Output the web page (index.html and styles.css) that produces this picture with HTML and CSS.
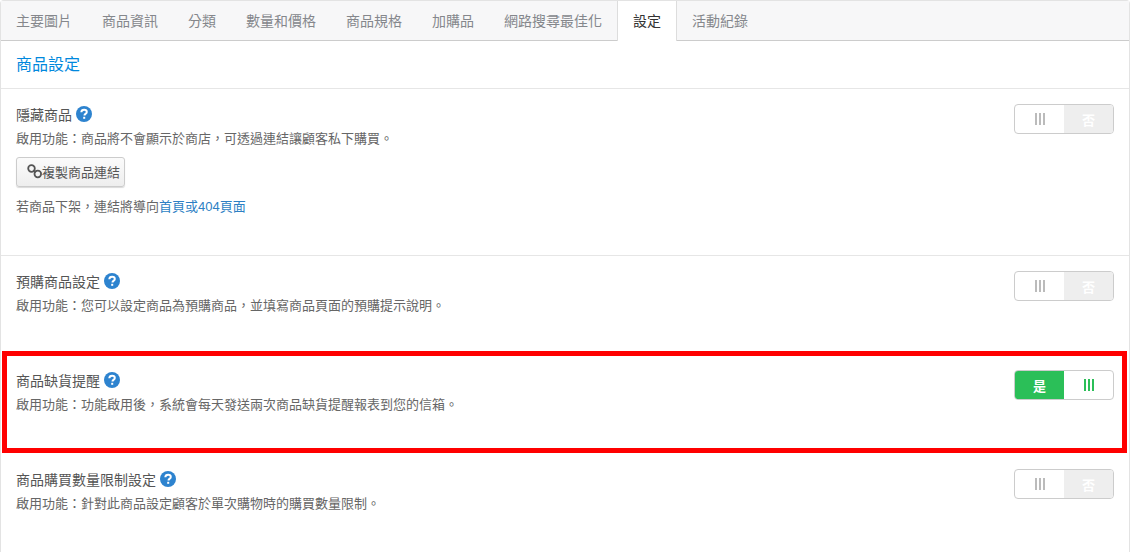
FILE: index.html
```html
<!DOCTYPE html>
<html lang="zh-Hant">
<head>
  <meta charset="UTF-8" />
  <title>商品設定</title>
  <link rel="stylesheet" href="styles.css">
</head>
<body>

<div class="panel">
  <ul class="tabs">
    <li>主要圖片</li>
    <li>商品資訊</li>
    <li>分類</li>
    <li>數量和價格</li>
    <li>商品規格</li>
    <li>加購品</li>
    <li>網路搜尋最佳化</li>
    <li class="active">設定</li>
    <li>活動紀錄</li>
  </ul>

  <h2 class="panel-title">商品設定</h2>

  <div class="row row-tall">
    <div class="row-text">
      <h3>隱藏商品 <svg class="help" viewBox="0 0 16 16"><use href="#help-icon"/></svg></h3>
      <p>啟用功能：商品將不會顯示於商店，可透過連結讓顧客私下購買。</p>
      <button class="copy-btn">
        <svg class="link-icon" viewBox="0 0 15 15"><circle cx="4.500" cy="4.500" r="3.300"/><circle cx="10.800" cy="10" r="3.300"/><path d="M6.500 6.200 9 8"/></svg>複製商品連結
      </button>
      <p class="redirect">若商品下架，連結將導向<a href="#">首頁或<span class="num">404</span>頁面</a></p>
    </div>
    <div class="toggle"><span class="bars"><i></i><i></i><i></i></span><span class="no">否</span></div>
  </div>

  <div class="row">
    <div class="row-text">
      <h3>預購商品設定 <svg class="help" viewBox="0 0 16 16"><use href="#help-icon"/></svg></h3>
      <p>啟用功能：您可以設定商品為預購商品，並填寫商品頁面的預購提示說明。</p>
    </div>
    <div class="toggle"><span class="bars"><i></i><i></i><i></i></span><span class="no">否</span></div>
  </div>

  <div class="row">
    <div class="row-text">
      <h3>商品缺貨提醒 <svg class="help" viewBox="0 0 16 16"><use href="#help-icon"/></svg></h3>
      <p>啟用功能：功能啟用後，系統會每天發送兩次商品缺貨提醒報表到您的信箱。</p>
    </div>
    <div class="toggle on"><span class="yes">是</span><span class="bars"><i></i><i></i><i></i></span></div>
  </div>

  <div class="row">
    <div class="row-text">
      <h3>商品購買數量限制設定 <svg class="help" viewBox="0 0 16 16"><use href="#help-icon"/></svg></h3>
      <p>啟用功能：針對此商品設定顧客於單次購物時的購買數量限制。</p>
    </div>
    <div class="toggle"><span class="bars"><i></i><i></i><i></i></span><span class="no">否</span></div>
  </div>

  <div class="highlight"></div>
</div>

<svg class="defs" width="0" height="0">
  <symbol id="help-icon" viewBox="0 0 16 16">
    <circle cx="8" cy="8" r="8" fill="#2d83cf"/>
    <path d="M5.300 6.200C5.400 4.600 6.500 3.700 8.100 3.700c1.600 0 2.700.9 2.700 2.200 0 1-.5 1.500-1.300 2-.7.5-1 .8-1 1.600" fill="none" stroke="#fff" stroke-width="2"/>
    <rect x="7.200" y="10.800" width="2" height="2" fill="#fff"/>
  </symbol>
</svg>

</body>
</html>
```

FILE: styles.css
```css
* {
  margin: 0;
  padding: 0;
  box-sizing: border-box;
}

body {
  background: #fff;
  font-family: "Noto Sans CJK TC", "Liberation Sans", sans-serif;
  color: #555;
  height: 552px;
  overflow: hidden;
}

.defs {
  position: absolute;
}

.panel {
  position: relative;
  width: 1130px;
  height: 552px;
  border: 1px solid #e3e3e3;
  border-bottom: none;
  border-radius: 4px 4px 0 0;
}

.tabs {
  display: flex;
  height: 40px;
  list-style: none;
  background: #f7f7f8;
  border-bottom: 1px solid #ccc;
}

.tabs li {
  padding: 0 15px;
  line-height: 39px;
  font-size: 14px;
  color: #85878c;
}

.tabs li.active {
  height: 40px;
  color: #333;
  background: #fff;
  border-left: 1px solid #ddd;
  border-right: 1px solid #ddd;
  padding: 0 15px;
}

.panel-title {
  height: 48px;
  padding-left: 15px;
  line-height: 45px;
  font-size: 16px;
  font-weight: normal;
  color: #0088dd;
  border-bottom: 1px solid #e6e6e6;
}

.row {
  display: flex;
  justify-content: space-between;
  align-items: flex-start;
  height: 99px;
  padding: 15px 15px 0;
}

.row-tall {
  height: 167px;
  border-bottom: 1px solid #e6e6e6;
}

.row-text {
  padding-top: 1px;
}

.row-text h3 {
  display: flex;
  align-items: center;
  gap: 4px;
  height: 18px;
  font-size: 14px;
  font-weight: normal;
  color: #555;
}

.row-text p {
  margin-top: 5px;
  font-size: 13px;
  line-height: 20px;
  color: #666;
}

.help {
  width: 16px;
  height: 16px;
}

.copy-btn {
  display: flex;
  align-items: center;
  width: 109px;
  height: 30px;
  margin-top: 9px;
  padding: 0 0 2px 10px;
  font-family: inherit;
  font-size: 13px;
  color: #555;
  background: linear-gradient(#fbfbfb, #eee);
  border: 1px solid #ccc;
  border-radius: 3px;
  box-shadow: 0 1px 1px rgba(0, 0, 0, 0.15);
}

.link-icon {
  width: 15px;
  height: 15px;
  fill: none;
  stroke: #555;
  stroke-width: 1.8;
}

.row-text .redirect {
  margin-top: 9px;
}

.redirect a {
  color: #2d7fc4;
  text-decoration: none;
}

.num {
  font-family: "Liberation Sans", sans-serif;
}

.toggle {
  display: flex;
  width: 100px;
  height: 30px;
  border: 1px solid #ccc;
  border-radius: 4px;
  overflow: hidden;
}

.toggle span {
  display: flex;
  align-items: center;
  justify-content: center;
  width: 50%;
  font-size: 13px;
  font-weight: bold;
}

.toggle .bars {
  gap: 2px;
}

.bars i {
  display: block;
  width: 2px;
  height: 12px;
  background: #bbb;
}

.toggle .no {
  color: #fff;
  background: #eee;
}

.toggle .yes {
  color: #fff;
  background: #2bbf58;
}

.toggle.on .bars i {
  background: #2bbf58;
}

.highlight {
  position: absolute;
  left: 1px;
  top: 350px;
  width: 1125px;
  height: 102px;
  border: 5px solid #ff0000;
}
```
